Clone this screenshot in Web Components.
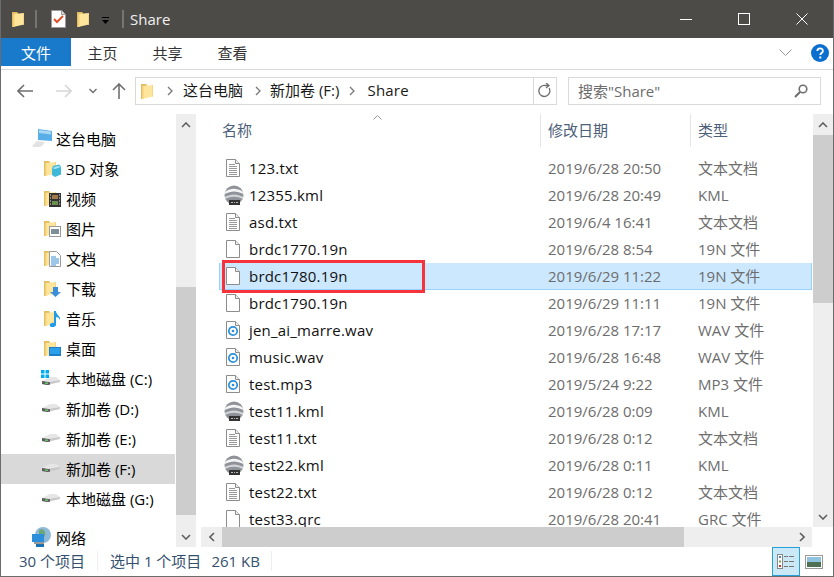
<!DOCTYPE html>
<html lang="zh">
<head>
<meta charset="utf-8">
<title>Share</title>
<style>
    html, body { margin: 0; height: 100%; overflow: hidden; }
    body { font: 15px "Open Sans", "Noto Sans CJK SC", sans-serif; color: #000; }
</style>
</head>
<body>
<explorer-window></explorer-window>
<script>
// ICONS {{{1

const FOLDER = `<path d="M0 1h5l1 1v12l-5 2H0z" fill="#e3bd62"/><path d="M1 3l11-1v11.500L1 16z" fill="#fde59c"/><path d="M1 3l1.500-.2V15.600L1 16z" fill="#f3d27a"/><path d="M11 2.100l1-.1v11.500l-1 .2z" fill="#f5d688"/>`;
const PAGE = `<path d="M.5.5h9l4 4v13H.5z" fill="#fff" stroke="#8c8c8c"/><path d="M9.500.5v4h4" fill="#eee" stroke="#8c8c8c"/>`;
const KML_ICON = `<circle cx="10" cy="10" r="9.500" fill="#8f9399"/><path d="M1.500 6.500C7 2.800 13 3 18.500 6.500l.8 2.500C13 5.500 7 5.500.8 9z" fill="#f6f6f6"/><path d="M.6 12C7 8.500 13 8.500 19.400 12l-.6 2.200C13 11 7 11 1.200 14.200z" fill="#d2d4d7"/><rect x="5" y="15" width="11" height="5" fill="#333"/><path d="M7 17.500h2M10 17.500h1M12 17.500h2" stroke="#bbb"/>`;
const DRIVE = `<path d="M0 5L8 1h6l4 3-13 2z" fill="#e6e6e6"/><path d="M0 5l5 1 13-2v2L5 9 0 8z" fill="#c9c9c9"/><path d="M0 5l8 1.200V8.800L5 9 0 8z" fill="#5c5c5c"/><rect x="3" y="6.500" width="3" height="1.500" fill="#67c46a"/>`;

const ICONS = {
    folder: [12, 16, FOLDER],
    check: [15, 18, `<path d="M.5.5h10l4 4v13H.5z" fill="#fff" stroke="#999"/><path d="M10.500.5v4h4" fill="#ddd" stroke="#999"/><path d="M3 9l3 3 6-6" fill="none" stroke="#e2502a" stroke-width="2"/>`],
    txt: [14, 18, PAGE + `<path d="M3 5.500h6M3 7.500h8M3 9.500h8M3 11.500h8M3 13.500h8M3 15.500h8" stroke="#9a9a9a"/>`],
    blank: [14, 18, PAGE],
    audio: [14, 18, PAGE + `<circle cx="7" cy="10" r="4.200" fill="none" stroke="#2a8fdc" stroke-width="1.700"/><circle cx="7" cy="10" r="1.300" fill="#2a8fdc"/>`],
    kml: [20, 20, KML_ICON],
    pc: [21, 18, `<path d="M6 0l14 2v10L6 11z" fill="#58aee6"/><path d="M7 1l12 1.500v3L7 4z" fill="#a9d8f5"/><path d="M0 17l5-5 8 1-3 4-2 1H2z" fill="#e2e2e2"/>`],
    net: [20, 20, `<circle cx="11" cy="8" r="8" fill="#8fb9d8"/><path d="M7 3c4-2 7 1 6 5s-4 3-6 1z" fill="#5fa04e" opacity=".7"/><rect x="0" y="7" width="12" height="8" fill="#2c8fdc"/><rect x="2" y="15" width="10" height="2" fill="#9a9a9a"/><path d="M4 17h8v3H4z" fill="#1e6fb0"/>`],
    objects: [17, 17, FOLDER + `<path d="M9 6l6-1.500 2 2v8L11 17l-3-2V8z" fill="#3fb7d8"/><path d="M8 8l6-2 3 1-6 2z" fill="#a8e5f2"/>`],
    video: [17, 17, FOLDER + `<rect x="5" y="3" width="12" height="14" fill="#333"/><rect x="8" y="5" width="6" height="4" fill="#a3794a"/><rect x="8" y="11" width="6" height="4" fill="#6d8f4e"/><path d="M6 5h1M6 8h1M6 11h1M6 14h1M15 5h1M15 8h1M15 11h1M15 14h1" stroke="#eee"/>`],
    pictures: [17, 17, FOLDER + `<rect x="5.500" y="6.500" width="11" height="10" fill="#fff" stroke="#999"/><rect x="7" y="9" width="8" height="5" fill="#7f8f9a"/>`],
    docs: [17, 17, FOLDER + `<path d="M5.500 1.500h7l4 4v11h-11z" fill="#fff" stroke="#999"/><path d="M7 7h5M7 9h8M7 11h8M7 13h8M7 15h5" stroke="#3b8fd0"/>`],
    download: [17, 17, FOLDER + `<path d="M9 7h5v5h3l-5.500 5L6 12h3z" fill="#3b8fd8"/>`],
    music: [17, 17, FOLDER + `<path d="M10 1h2c0 4 5 5 4 9-1-2-2-3-4-3v8c0 2-5 3-6 1s2-4 4-3z" fill="#1f9be8"/>`],
    desktop: [17, 17, FOLDER + `<rect x="5" y="7" width="12" height="9" fill="#1e7fc8"/><rect x="6" y="8" width="10" height="6" fill="#2aa0ea"/>`],
    winDrive: [20, 17, `<g transform="translate(1 6)">${DRIVE}</g><path d="M0 0h3.500v3.500H0zM4.500 0H8v3.500H4.500zM0 4.500h3.500V8H0zM4.500 4.500H8V8H4.500z" fill="#00adef"/>`],
    drive: [20, 10, `<g transform="translate(1 0)">${DRIVE}</g>`],
    back: [16, 14, `<path d="M7 1L1 7l6 6M1 7h15" fill="none" stroke="#6f6f6f" stroke-width="1.600"/>`],
    forward: [16, 14, `<path d="M9 1l6 6-6 6M15 7H0" fill="none" stroke="#d6d6d6" stroke-width="1.600"/>`],
    up: [14, 16, `<path d="M1 7l6-6 6 6M7 1v15" fill="none" stroke="#6f6f6f" stroke-width="1.600"/>`],
    chevDown: [8, 6, `<path d="M.5 1L4 4.500 7.500 1" fill="none" stroke="#6f6f6f" stroke-width="1.400"/>`],
    chevRight: [6, 10, `<path d="M1 1l4 4-4 4" fill="none" stroke="#777" stroke-width="1.300"/>`],
    ribbonChev: [13, 7, `<path d="M.5.5l6 6 6-6" fill="none" stroke="#9a9a9a"/>`],
    help: [18, 18, `<circle cx="9" cy="9" r="9" fill="#0a6fcf"/><path d="M6.300 7c0-3.500 5.600-3.500 5.600 0 0 2-2.600 2-2.600 4" fill="none" stroke="#fff" stroke-width="1.800"/><rect x="8.300" y="12.500" width="2" height="2" fill="#fff"/>`],
    refresh: [14, 16, `<path d="M11 5a5.500 5.500 0 1 1-4-2.500h3M8 0l3 2.500L8 5" fill="none" stroke="#6f6f6f" stroke-width="1.300"/>`],
    search: [14, 14, `<circle cx="9" cy="5" r="3.800" fill="none" stroke="#6f6f6f" stroke-width="1.600"/><path d="M6 8l-5 5" stroke="#6f6f6f" stroke-width="2.200"/>`],
    qatArrow: [7, 8, `<path d="M0 0h7v1H0zM0 3h7L3.500 7z" fill="#000"/>`],
    minimize: [12, 1, `<rect width="12" height="1" fill="#fff"/>`],
    maximize: [12, 12, `<rect x=".5" y=".5" width="11" height="11" fill="none" stroke="#fff"/>`],
    close: [12, 12, `<path d="M.5.5l11 11M11.500.5l-11 11" stroke="#fff"/>`],
    scrollUp: [10, 6, `<path d="M1 5l4-4 4 4" fill="none" stroke="#606060" stroke-width="1.600"/>`],
    scrollDown: [10, 6, `<path d="M1 1l4 4 4-4" fill="none" stroke="#606060" stroke-width="1.600"/>`],
    scrollLeft: [6, 10, `<path d="M5 1L1 5l4 4" fill="none" stroke="#606060" stroke-width="1.600"/>`],
    scrollRight: [6, 10, `<path d="M1 1l4 4-4 4" fill="none" stroke="#606060" stroke-width="1.600"/>`],
    sortUp: [9, 5, `<path d="M.5 4.500l4-4 4 4" fill="none" stroke="#9a9a9a"/>`],
    viewDetails: [18, 15, `<rect x=".5" y=".5" width="5" height="14" fill="#fff" stroke="#888"/><rect x="2" y="2" width="2" height="2" fill="#5a7fb0"/><rect x="2" y="6.500" width="2" height="2" fill="#7f9f4f"/><rect x="2" y="11" width="2" height="2" fill="#c0392b"/><path d="M7 2.500h4M12 2.500h5M7 7.500h4M12 7.500h5M7 12.500h4M12 12.500h5" stroke="#777"/>`],
    viewThumbs: [18, 14, `<rect x=".5" y=".5" width="17" height="13" fill="#fff" stroke="#999"/><rect x="2" y="2" width="14" height="5" fill="#8fc4e0"/><rect x="2" y="7" width="14" height="5" fill="#4d6f52"/>`],
};

// class WinIcon {{{1

class WinIcon extends HTMLElement
{
    connectedCallback() {
        const [w, h, body] = ICONS[this.getAttribute('name')];
        if (this.shadowRoot)
            return;
        this.attachShadow({ mode: 'open' });
        this.shadowRoot.innerHTML = `
            <style>:host { display: block; flex: none; line-height: 0; } svg { display: block; }</style>
            <svg xmlns="http://www.w3.org/2000/svg" width="${w}" height="${h}" viewBox="0 0 ${w} ${h}">${body}</svg>`;
    }
}

// class TitleBar {{{1

class TitleBar extends HTMLElement
{
    connectedCallback() {
        this.attachShadow({ mode: 'open' });
        this.shadowRoot.innerHTML = `
            <style>
            :host { display: flex; align-items: center; height: 38px; background: #4d4b48; color: #f0f0f0; flex: none; }
            .qat { display: flex; align-items: center; padding-left: 11px; }
            .sep { width: 2px; height: 18px; background: #6b6966; border: 1px solid #77756f; box-sizing: border-box; }
            .title { margin-left: 6px; flex: 1; }
            .btns { display: flex; align-items: center; padding-right: 25px; gap: 46px; }
            </style>
            <div class="qat">
                <win-icon name="folder"></win-icon>
                <span class="sep" style="margin-left:11px"></span>
                <win-icon name="check" style="margin-left:14px"></win-icon>
                <win-icon name="folder" style="margin-left:11px"></win-icon>
                <win-icon name="qatArrow" style="margin-left:13px;margin-top:4px"></win-icon>
                <span class="sep" style="margin-left:13px"></span>
            </div>
            <span class="title">Share</span>
            <div class="btns">
                <win-icon name="minimize" style="margin-top:1px"></win-icon>
                <win-icon name="maximize"></win-icon>
                <win-icon name="close"></win-icon>
            </div>`;
    }
}

// class RibbonTabs {{{1

class RibbonTabs extends HTMLElement
{
    connectedCallback() {
        this.attachShadow({ mode: 'open' });
        this.shadowRoot.innerHTML = `
            <style>
            :host { display: flex; align-items: stretch; height: 31px; flex: none; border-bottom: 1px solid #dadbdc; box-sizing: content-box; color: #333; }
            .file { width: 70px; height: 28px; background: #1979ca; color: #fff; display: flex; align-items: center; justify-content: center; }
            .tab { width: 65px; height: 28px; display: flex; align-items: center; justify-content: center; }
            .spacer { flex: 1; }
            .right { display: flex; align-items: center; gap: 19px; padding: 0 4px 2px 0; }
            </style>
            <div class="file">文件</div>
            <div class="tab" style="margin-left:-1px">主页</div>
            <div class="tab">共享</div>
            <div class="tab">查看</div>
            <div class="spacer"></div>
            <div class="right"><win-icon name="ribbonChev"></win-icon><win-icon name="help"></win-icon></div>`;
    }
}

// class AddressBar {{{1

class AddressBar extends HTMLElement
{
    connectedCallback() {
        this.attachShadow({ mode: 'open' });
        this.shadowRoot.innerHTML = `
            <style>
            :host { display: flex; align-items: center; height: 44px; flex: none; box-sizing: border-box; padding-bottom: 3px; color: #1a1a1a; }
            .nav { display: flex; align-items: center; width: 134px; padding-left: 16px; box-sizing: border-box; }
            .addr { width: 422px; height: 28px; box-sizing: border-box; border: 1px solid #d9d9d9; display: flex; align-items: center; padding-left: 5px; }
            .addr span { margin-bottom: 2px; }
            .refresh { margin-left: auto; width: 22px; height: 100%; border-left: 1px solid #d9d9d9; display: flex; align-items: center; justify-content: center; }
            .search { margin-left: 11px; width: 253px; height: 28px; box-sizing: border-box; border: 1px solid #d9d9d9; display: flex; align-items: center; padding: 0 12px 0 9px; justify-content: space-between; color: #6d6d6d; }
            </style>
            <div class="nav">
                <win-icon name="back"></win-icon>
                <win-icon name="forward" style="margin-left:23px"></win-icon>
                <win-icon name="chevDown" style="margin-left:17px"></win-icon>
                <win-icon name="up" style="margin-left:15px"></win-icon>
            </div>
            <div class="addr">
                <win-icon name="folder"></win-icon>
                <win-icon name="chevRight" style="margin-left:14px"></win-icon>
                <span style="margin-left:10px">这台电脑</span>
                <win-icon name="chevRight" style="margin-left:12px"></win-icon>
                <span style="margin-left:9px">新加卷 (F:)</span>
                <win-icon name="chevRight" style="margin-left:10px"></win-icon>
                <span style="margin-left:12px;letter-spacing:.2px">Share</span>
                <div class="refresh"><win-icon name="refresh"></win-icon></div>
            </div>
            <div class="search"><span>搜索"Share"</span><win-icon name="search"></win-icon></div>`;
    }
}

// class ScrollBar {{{1

/*
 * Attributes:
 *   orient:  "v" or "h"
 *   before:  free track in px before the thumb
 *   thumb:   thumb length in px
 */
class ScrollBar extends HTMLElement
{
    connectedCallback() {
        const vertical = this.getAttribute('orient') === 'v';
        const before = this.getAttribute('before');
        const thumb = this.getAttribute('thumb');
        const [a, b] = vertical ? ['scrollUp', 'scrollDown'] : ['scrollLeft', 'scrollRight'];
        this.attachShadow({ mode: 'open' });
        this.shadowRoot.innerHTML = `
            <style>
            :host { display: flex; flex: none; background: #eeeeee; flex-direction: ${vertical ? 'column' : 'row'}; ${vertical ? 'width: 20px' : 'height: 20px'}; }
            .arrow { flex: none; width: ${vertical ? 20 : 21}px; height: ${vertical ? 21 : 20}px; display: flex; align-items: center; justify-content: center; }
            .track { flex: 1; min-width: 0; min-height: 0; display: flex; flex-direction: inherit; }
            .thumb { flex: none; background: #cdcdcd; ${vertical ? `height: ${thumb}px; margin-top: ${before}px` : `width: ${thumb}px; margin-left: ${before}px`}; }
            </style>
            <div class="arrow"><win-icon name="${a}"></win-icon></div>
            <div class="track"><div class="thumb"></div></div>
            <div class="arrow"><win-icon name="${b}"></win-icon></div>`;
    }
}

// class NavItem / NavPane {{{1

class NavItem extends HTMLElement
{
    connectedCallback() {
        const icon = this.getAttribute('icon');
        const left = this.getAttribute('indent');
        const gap = this.getAttribute('gap');
        this.attachShadow({ mode: 'open' });
        this.shadowRoot.innerHTML = `
            <style>
            :host { display: flex; align-items: center; height: 30px; flex: none; box-sizing: border-box; padding: 0 0 2px ${left}px; white-space: nowrap; }
            :host([selected]) { background: #d9d9d9; }
            .lbl { margin-left: ${gap}px; }
            </style>
            <win-icon name="${icon}"></win-icon>
            <span class="lbl"><slot></slot></span>`;
    }
}

class NavPane extends HTMLElement
{
    connectedCallback() {
        this.attachShadow({ mode: 'open' });
        this.shadowRoot.innerHTML = `
            <style>
            :host { display: flex; flex: none; width: 195px; overflow: hidden; }
            .list { width: 174px; margin-right: 1px; flex: none; padding-top: 10px; box-sizing: border-box; overflow: hidden; display: flex; flex-direction: column; }
            .gap { height: 9px; flex: none; }
            </style>
            <div class="list">
                <nav-item icon="pc" indent="31" gap="3">这台电脑</nav-item>
                <nav-item icon="objects" indent="43" gap="5">3D 对象</nav-item>
                <nav-item icon="video" indent="43" gap="5">视频</nav-item>
                <nav-item icon="pictures" indent="43" gap="5">图片</nav-item>
                <nav-item icon="docs" indent="43" gap="5">文档</nav-item>
                <nav-item icon="download" indent="43" gap="5">下载</nav-item>
                <nav-item icon="music" indent="43" gap="5">音乐</nav-item>
                <nav-item icon="desktop" indent="43" gap="5">桌面</nav-item>
                <nav-item icon="winDrive" indent="40" gap="5">本地磁盘 (C:)</nav-item>
                <nav-item icon="drive" indent="40" gap="5">新加卷 (D:)</nav-item>
                <nav-item icon="drive" indent="40" gap="5">新加卷 (E:)</nav-item>
                <nav-item icon="drive" indent="40" gap="5" selected>新加卷 (F:)</nav-item>
                <nav-item icon="drive" indent="40" gap="5">本地磁盘 (G:)</nav-item>
                <div class="gap"></div>
                <nav-item icon="net" indent="31" gap="4">网络</nav-item>
            </div>
            <scroll-bar orient="v" before="152" thumb="228"></scroll-bar>`;
    }
}

// class FileRow {{{1

class FileRow extends HTMLElement
{
    connectedCallback() {
        const icon = this.getAttribute('icon');
        const wide = icon === 'kml';
        this.attachShadow({ mode: 'open' });
        this.shadowRoot.innerHTML = `
            <style>
            :host { display: grid; grid-template-columns: 328px 150px 1fr; align-items: center; height: 27px; flex: none; box-sizing: border-box; padding-bottom: 2px; color: #6d6d6d; white-space: nowrap; }
            :host([selected]) { background: #cce8ff; border-bottom: 1px solid #99d1ff; border-left: 1px solid #99d1ff; border-right: 1px solid #99d1ff; margin-left: -1px; padding-bottom: 1px; }
            .name { display: flex; align-items: center; color: #111; padding-left: ${wide ? 4 : 6}px; letter-spacing: .2px; }
            .txt { margin-left: ${wide ? 5 : 9}px; }
            </style>
            <div class="name"><win-icon name="${icon}"></win-icon><span class="txt"><slot></slot></span></div>
            <div>${this.getAttribute('date')}</div>
            <div>${this.getAttribute('type')}</div>`;
    }
}

// class FilePane {{{1

const FILES = [
    ['txt', '123.txt', '2019/6/28 20:50', '文本文档'],
    ['kml', '12355.kml', '2019/6/28 20:49', 'KML'],
    ['txt', 'asd.txt', '2019/6/4 16:41', '文本文档'],
    ['blank', 'brdc1770.19n', '2019/6/28 8:54', '19N 文件'],
    ['blank', 'brdc1780.19n', '2019/6/29 11:22', '19N 文件', true],
    ['blank', 'brdc1790.19n', '2019/6/29 11:11', '19N 文件'],
    ['audio', 'jen_ai_marre.wav', '2019/6/28 17:17', 'WAV 文件'],
    ['audio', 'music.wav', '2019/6/28 16:48', 'WAV 文件'],
    ['audio', 'test.mp3', '2019/5/24 9:22', 'MP3 文件'],
    ['kml', 'test11.kml', '2019/6/28 0:09', 'KML'],
    ['txt', 'test11.txt', '2019/6/28 0:12', '文本文档'],
    ['kml', 'test22.kml', '2019/6/28 0:11', 'KML'],
    ['txt', 'test22.txt', '2019/6/28 0:12', '文本文档'],
    ['blank', 'test33.qrc', '2019/6/28 20:41', 'GRC 文件'],
];

class FilePane extends HTMLElement
{
    connectedCallback() {
        const rows = FILES.map(([icon, name, date, type, sel]) =>
            `<file-row icon="${icon}" date="${date}" type="${type}"${sel ? ' selected' : ''}>${name}</file-row>`).join('');
        this.attachShadow({ mode: 'open' });
        this.shadowRoot.innerHTML = `
            <style>
            :host { display: flex; flex-direction: column; flex: 1; min-width: 0; position: relative; }
            .main { display: flex; flex: 1; min-height: 0; }
            .col { flex: 1; min-width: 0; display: flex; flex-direction: column; overflow: hidden; }
            .head { display: grid; grid-template-columns: 328px 150px 1fr; height: 33px; flex: none; margin-left: 21px; color: #4c607a; }
            .head div { display: flex; align-items: center; position: relative; padding-bottom: 2px; }
            .head div + div { border-left: 1px solid #e5e5e5; padding-left: 7px; margin-left: -10px; }
            .sort { position: absolute; left: 151px; top: 1px; }
            .rows { display: flex; flex-direction: column; flex: none; margin: 8px 1px 0 19px; }
            .hbar { margin-right: 21px; }
            .mark { position: absolute; left: 21px; top: 146px; width: 203px; height: 33px; box-sizing: border-box; border: 3px solid #f6323a; }
            </style>
            <div class="main">
                <div class="col">
                    <div class="head">
                        <div>名称<win-icon class="sort" name="sortUp"></win-icon></div>
                        <div>修改日期</div>
                        <div>类型</div>
                    </div>
                    <div class="rows">${rows}</div>
                </div>
                <scroll-bar orient="v" before="0" thumb="168"></scroll-bar>
            </div>
            <scroll-bar class="hbar" orient="h" before="0" thumb="462"></scroll-bar>
            <div class="mark"></div>`;
    }
}

// class StatusBar {{{1

class StatusBar extends HTMLElement
{
    connectedCallback() {
        this.attachShadow({ mode: 'open' });
        this.shadowRoot.innerHTML = `
            <style>
            :host { display: flex; align-items: center; height: 29px; flex: none; color: #34506f; white-space: nowrap; }
            .cell { display: flex; align-items: center; height: 20px; margin-bottom: 2px; }
            .a { width: 78px; padding-left: 18px; border-right: 1px solid #eeeeee; }
            .b { padding-left: 12px; }
            .c { padding-left: 10px; padding-right: 11px; border-right: 1px solid #eeeeee; }
            .views { margin-left: auto; display: flex; align-items: stretch; height: 100%; padding-right: 5px; }
            .on { width: 26px; border: 1px solid #26a0da; background: #cbe8f6; display: flex; align-items: center; justify-content: center; }
            .off { width: 28px; display: flex; align-items: center; justify-content: center; }
            </style>
            <div class="cell a">30 个项目</div>
            <div class="cell b">选中 1 个项目</div>
            <div class="cell c">261 KB</div>
            <div class="views">
                <div class="on"><win-icon name="viewDetails"></win-icon></div>
                <div class="off"><win-icon name="viewThumbs"></win-icon></div>
            </div>`;
    }
}

// class ExplorerWindow {{{1

class ExplorerWindow extends HTMLElement
{
    connectedCallback() {
        this.attachShadow({ mode: 'open' });
        this.shadowRoot.innerHTML = `
            <style>
            :host { display: flex; flex-direction: column; width: 834px; height: 577px; box-sizing: border-box; border: 1px solid #6b6b6b; border-top: 0; background: #fff; overflow: hidden; }
            .body { display: flex; flex: 1; min-height: 0; gap: 5px; }
            </style>
            <title-bar></title-bar>
            <ribbon-tabs></ribbon-tabs>
            <address-bar></address-bar>
            <div class="body">
                <nav-pane></nav-pane>
                <file-pane></file-pane>
            </div>
            <status-bar></status-bar>`;
    }
}

// }}}

customElements.define('win-icon', WinIcon);
customElements.define('title-bar', TitleBar);
customElements.define('ribbon-tabs', RibbonTabs);
customElements.define('address-bar', AddressBar);
customElements.define('scroll-bar', ScrollBar);
customElements.define('nav-item', NavItem);
customElements.define('nav-pane', NavPane);
customElements.define('file-row', FileRow);
customElements.define('file-pane', FilePane);
customElements.define('status-bar', StatusBar);
customElements.define('explorer-window', ExplorerWindow);
</script>
</body>
</html>
